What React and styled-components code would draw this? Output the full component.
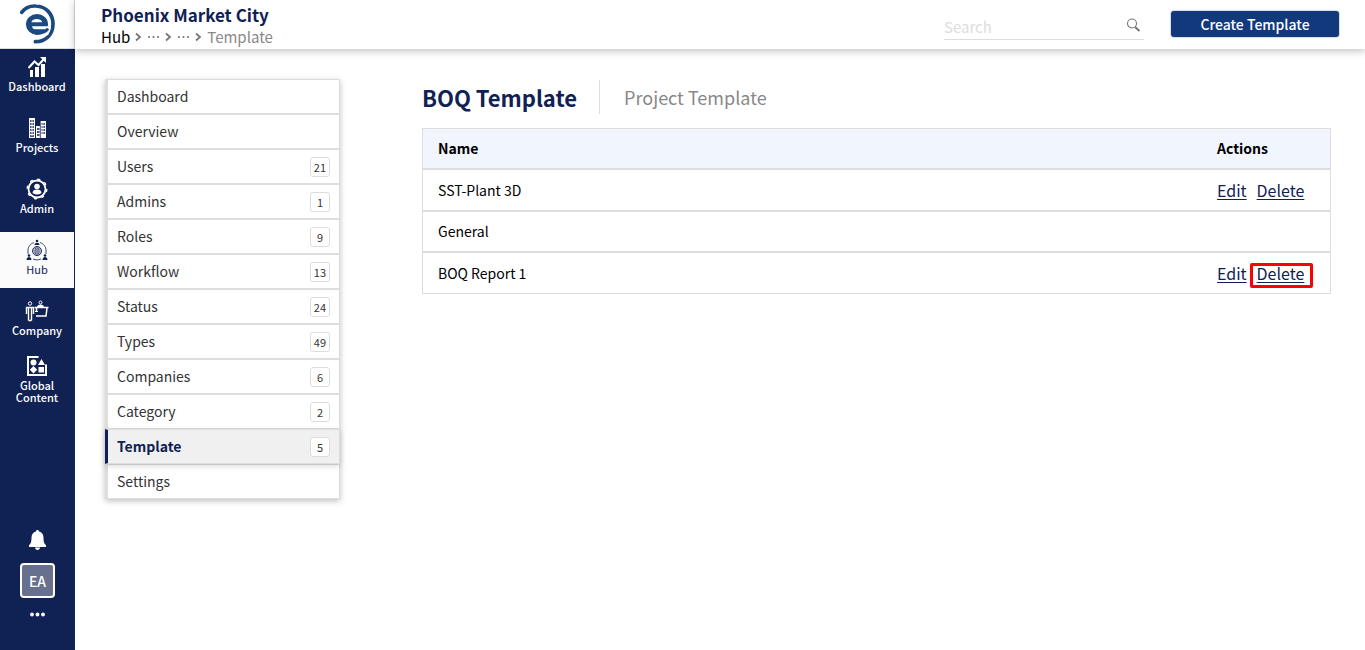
import React from "react";
import styled, { createGlobalStyle } from "styled-components";

const GlobalStyle = createGlobalStyle`
  * {
    box-sizing: border-box;
  }
  body {
    margin: 0;
    background-color: #fff;
    color: #000;
    font-family: "Noto Sans CJK SC", "Noto Sans", sans-serif;
    font-size: 14px;
    line-height: 20px;
  }
  button,
  input {
    font-family: inherit;
  }
`;

const Page = styled.div`
  display: flex;
  min-height: 100vh;
`;

const Sidebar = styled.aside`
  width: 75px;
  flex-shrink: 0;
  display: flex;
  flex-direction: column;
  background-color: #102154;
`;

const LogoLink = styled.a`
  height: 49px;
  display: flex;
  align-items: center;
  justify-content: center;
  background-color: #fff;
  border-right: 1px solid #ddd;
  border-bottom: 1px solid #ddd;
  padding-bottom: 1px;
`;

const SideNav = styled.nav`
  display: flex;
  flex-direction: column;
  gap: 5px;
`;

const SideLink = styled.a`
  min-height: 56px;
  margin-right: 1px;
  display: flex;
  flex-direction: column;
  align-items: center;
  justify-content: center;
  gap: 2px;
  padding-bottom: 6px;
  color: ${(props) => (props.$active ? "#102154" : "#fff")};
  background-color: ${(props) => (props.$active ? "#fbfbfb" : "transparent")};
  font-size: 11px;
  font-weight: ${(props) => (props.$active ? 400 : 500)};
  line-height: 12px;
  text-align: center;
  text-decoration: none;
`;

const SideFooter = styled.div`
  margin-top: auto;
  padding-bottom: 32px;
  display: flex;
  flex-direction: column;
  align-items: center;
  gap: 13px;
`;

const IconButton = styled.button`
  display: flex;
  padding: 0;
  border: 0;
  background: none;
  color: #fff;
  cursor: pointer;
`;

const Avatar = styled.button`
  width: 35px;
  height: 35px;
  padding: 0;
  border: 2px solid #fff;
  border-radius: 4px;
  background-color: #67708c;
  color: #fff;
  font-size: 14px;
  font-weight: 500;
  line-height: 20px;
  cursor: pointer;
`;

const Body = styled.div`
  flex: 1;
  min-width: 0;
`;

const Header = styled.header`
  height: 49px;
  display: flex;
  align-items: center;
  justify-content: space-between;
  padding: 0 26px;
  background-color: #fff;
  box-shadow: 0 2px 8px rgba(0, 0, 0, 0.25);
`;

const Heading = styled.div`
  padding-top: 2px;
`;

const ProjectName = styled.h1`
  margin: 0;
  color: #102154;
  font-size: 17px;
  font-weight: 700;
  line-height: 22px;
`;

const Crumbs = styled.nav`
  display: flex;
  align-items: center;
  gap: 5px;
  color: #888;
  font-size: 15px;
  line-height: 22px;
  a {
    color: #000;
    text-decoration: none;
  }
`;

const Dots = styled.svg`
  width: 13px;
  height: 4px;
  fill: #777;
`;

const HeaderTools = styled.div`
  display: flex;
  align-items: center;
  gap: 27px;
  padding-bottom: 2px;
`;

const SearchBox = styled.label`
  width: 200px;
  height: 28px;
  display: flex;
  align-items: center;
  margin-top: 4px;
  padding-right: 3px;
  border-bottom: 1px solid #ddd;
`;

const SearchInput = styled.input`
  flex: 1;
  min-width: 0;
  padding: 3px 0 0;
  border: 0;
  outline: 0;
  font-size: 15px;
  line-height: 20px;
  &::placeholder {
    color: #ddd;
  }
`;

const CreateButton = styled.button`
  width: 168px;
  height: 26px;
  padding: 0;
  border: 0;
  border-radius: 3px;
  box-shadow: 0 0 1px 1px #d5dae3;
  background-color: #11397c;
  color: #fff;
  font-size: 14px;
  font-weight: 500;
  line-height: 20px;
  cursor: pointer;
`;

const Content = styled.div`
  display: flex;
  align-items: flex-start;
  gap: 82px;
  padding: 30px 34px 30px 30px;
`;

const Menu = styled.nav`
  width: 235px;
  flex-shrink: 0;
  box-shadow: 0 2px 6px rgba(0, 0, 0, 0.25);
`;

const MenuLink = styled.a`
  height: 35px;
  display: flex;
  align-items: center;
  justify-content: space-between;
  padding: 0 9px 1px;
  border: 1px solid #ddd;
  border-left: 3px solid ${(props) => (props.$active ? "#102154" : "#ddd")};
  background-color: ${(props) => (props.$active ? "#f0f0f0" : "#fff")};
  box-shadow: ${(props) =>
    props.$active ? "0 2px 6px rgba(0, 0, 0, 0.15)" : "none"};
  position: ${(props) => (props.$active ? "relative" : "static")};
  color: ${(props) => (props.$active ? "#102154" : "#333")};
  font-size: 14px;
  font-weight: ${(props) => (props.$active ? 700 : 400)};
  line-height: 20px;
  text-decoration: none;
`;

const Count = styled.span`
  min-width: 20px;
  height: 20px;
  margin-top: 1px;
  padding: 0 3px;
  border: 1px solid #ddd;
  border-radius: 3px;
  background-color: #fff;
  color: #333;
  font-size: 11px;
  font-weight: 400;
  line-height: 18px;
  text-align: center;
`;

const Main = styled.main`
  flex: 1;
  min-width: 0;
`;

const Tabs = styled.div`
  display: flex;
  align-items: center;
  margin: 1px 0 14px;
`;

const Tab = styled.button`
  height: 34px;
  padding: ${(props) => (props.$active ? "0 22px 0 0" : "0 24px")};
  border: 0;
  border-right: ${(props) => (props.$active ? "1px solid #ddd" : "0")};
  background: none;
  color: ${(props) => (props.$active ? "#102154" : "#888")};
  font-size: ${(props) => (props.$active ? "22px" : "18px")};
  font-weight: ${(props) => (props.$active ? 700 : 400)};
  line-height: 32px;
  cursor: pointer;
`;

const Table = styled.table`
  width: 100%;
  border-collapse: separate;
  border-spacing: 0;
  border: 1px solid #ddd;
  border-width: 0 1px;
  th,
  td {
    padding: 9px 15px 10px;
    border: 1px solid #ddd;
    border-width: 1px 0;
    text-align: left;
    line-height: 20px;
  }
  th {
    background-color: #f1f6fe;
    font-weight: 700;
  }
  th:last-child,
  td:last-child {
    width: 128px;
    white-space: nowrap;
  }
`;

const Actions = styled.div`
  display: flex;
  gap: 10px;
  padding-top: 1px;
  font-size: 16px;
  line-height: 20px;
`;

const ActionLink = styled.a`
  position: relative;
  color: #102154;
  text-decoration: underline;
  text-decoration-thickness: 1px;
  text-underline-offset: 2px;
`;

const Highlight = styled.span`
  position: absolute;
  inset: 0 -9px -5px -7px;
  border: 3px solid #f00;
  border-radius: 2px;
  pointer-events: none;
`;

const LogoIcon = () => (
  <svg width="35" height="40" viewBox="0 0 105 120" fill="none" stroke="#1a4a80">
    <path d="M5 25C16 10 31 5 48 6C78 7 99 30 99 60C99 91 78 113 46 113" strokeWidth="11" strokeLinecap="round" />
    <ellipse cx="51" cy="61" rx="33" ry="31" fill="#1a4a80" stroke="none" />
    <path d="M34 55C38 42 62 42 67 55z" fill="#fff" stroke="none" />
    <path d="M36 67H92V76H46C40 76 37 72 36 67z" fill="#fff" stroke="none" />
    <path d="M78 76H92L84 94H60z" fill="#fff" stroke="none" />
    <path d="M46 87C62 89 76 85 84 74" strokeWidth="9" />
  </svg>
);

const ChartIcon = () => (
  <svg width="19" height="22" viewBox="0 0 19 22" fill="#fff">
    <path d="M2 14h3v7H2zM7 11h4v10H7zM13 8h4v13h-4z" />
    <path d="M0.500 12l6-6.500 4 3.500 5-5.500" fill="none" stroke="#fff" strokeWidth="2" />
    <path d="M12 1h6v6z" />
  </svg>
);

const BuildingsIcon = () => (
  <svg width="19" height="22" viewBox="0 0 19 22">
    <path d="M1 1h6v20H1zM8 9h4v12H8zM12 4h6v17h-6z" fill="#fff" />
    <path d="M2 4h4M2 7h4M2 10h4M2 13h4M2 16h4M2 19h4M9 12h2.500M9 15h2.500M9 18h2.500M13.500 7h3.500M13.500 10h3.500M13.500 13h3.500M13.500 16h3.500" stroke="#102154" strokeWidth="1.300" />
    <path d="M4 2v17M15 5v14" stroke="#fff" strokeWidth="0.800" />
    <path d="M12.300 4v17" stroke="#102154" strokeWidth="0.800" />
  </svg>
);

const AdminIcon = () => (
  <svg width="22" height="22" viewBox="0 0 22 22" fill="none" stroke="#fff">
    <circle cx="11" cy="11" r="8.500" strokeWidth="1.800" />
    <circle cx="11" cy="11" r="9.800" strokeWidth="1.400" strokeDasharray="3 4.700" />
    <circle cx="11" cy="8.500" r="2.800" fill="#fff" stroke="none" />
    <path d="M6.500 15c0-2.500 2-3.500 4.500-3.500s4.500 1 4.500 3.500c-3 2-6 2-9 0z" fill="#fff" stroke="none" />
  </svg>
);

const HubIcon = () => (
  <svg width="22" height="22" viewBox="0 0 22 22" fill="none" stroke="#102154">
    <circle cx="11" cy="12" r="4.500" strokeWidth="0.900" />
    <ellipse cx="11" cy="12" rx="2" ry="4.500" strokeWidth="0.600" />
    <path d="M6.500 12h9M11 7.500v9M7 10h8M7 14h8" strokeWidth="0.600" />
    <path d="M8 3.500C4 5 2 8 2 11v4M14 3.500c4 1.500 6 4.500 6 7.500v4M7 20c3 1.200 5 1.200 8 0" strokeWidth="0.800" />
    <g fill="#102154" stroke="none">
      <circle cx="11" cy="2" r="1.300" />
      <path d="M8.500 6c0-3 5-3 5 0z" />
      <circle cx="3" cy="16.500" r="1.300" />
      <path d="M0.500 21c0-4 5-4 5 0z" />
      <circle cx="19" cy="16.500" r="1.300" />
      <path d="M16.500 21c0-4 5-4 5 0z" />
    </g>
  </svg>
);

const CompanyIcon = () => (
  <svg width="24" height="22" viewBox="0 0 24 22" fill="none" stroke="#fff">
    <circle cx="5" cy="3.500" r="1.700" />
    <path d="M1.500 14V7.500h7V14M3.500 8v12.500M6.500 8v12.500M3.500 20.500H6.500" strokeWidth="1.400" />
    <circle cx="15.500" cy="2.500" r="1.500" />
    <path d="M12 7c0-3.500 7-3.500 7 0z" fill="#fff" stroke="none" />
    <path d="M9.500 7.500h14M11.500 8v3.500M22 8l-1 8H11" strokeWidth="1.500" />
    <path d="M10 11.500h3" />
  </svg>
);

const GlobalIcon = () => (
  <svg width="22" height="22" viewBox="0 0 22 22" fill="#fff">
    <path d="M12.500 2H2v18h18V9.500" fill="none" stroke="#fff" strokeWidth="2" />
    <circle cx="7.500" cy="7.500" r="3" />
    <path d="M15.500 4l3.500 6h-7zM7.500 11l3.700 3.700-3.700 3.700-3.700-3.700zM12.500 12h5.500v5.500h-5.500z" />
  </svg>
);

const BellIcon = () => (
  <svg width="17" height="20" viewBox="0 0 17 20" fill="#fff">
    <path d="M8.500 0c1 0 1.500.6 1.500 1.500 3 .7 4.500 3 4.500 6 0 4.500.7 6 2.500 7.700V17H0v-1.800C1.800 13.500 2.500 12 2.500 7.500c0-3 1.500-5.300 4.500-6C7 .6 7.500 0 8.500 0zM6 17.500h5c0 3.300-5 3.300-5 0z" />
  </svg>
);

const MoreIcon = () => (
  <svg width="15" height="7" viewBox="0 0 15 7" fill="#fff">
    <circle cx="2" cy="3.500" r="1.900" />
    <circle cx="7.500" cy="3.500" r="1.900" />
    <circle cx="13" cy="3.500" r="1.900" />
  </svg>
);

const SearchIcon = () => (
  <svg width="15" height="15" viewBox="0 0 15 15" fill="none" stroke="#777">
    <circle cx="6" cy="5.500" r="4.500" strokeWidth="1.100" />
    <path d="M9 9l4.500 4" strokeWidth="2" />
  </svg>
);

const Chevron = () => (
  <svg width="7" height="10" viewBox="0 0 7 10" fill="none" stroke="#777" strokeWidth="1.800">
    <path d="M1 1.500l4 3.500-4 3.500" />
  </svg>
);

const CrumbDots = () => (
  <Dots viewBox="0 0 13 4">
    <circle cx="2" cy="2" r="1.100" />
    <circle cx="6.500" cy="2" r="1.100" />
    <circle cx="11" cy="2" r="1.100" />
  </Dots>
);

const sideItems = [
  { label: "Dashboard", icon: ChartIcon },
  { label: "Projects", icon: BuildingsIcon },
  { label: "Admin", icon: AdminIcon },
  { label: "Hub", icon: HubIcon, active: true },
  { label: "Company", icon: CompanyIcon },
  { label: "Global Content", icon: GlobalIcon },
];

const menuItems = [
  { label: "Dashboard" },
  { label: "Overview" },
  { label: "Users", count: 21 },
  { label: "Admins", count: 1 },
  { label: "Roles", count: 9 },
  { label: "Workflow", count: 13 },
  { label: "Status", count: 24 },
  { label: "Types", count: 49 },
  { label: "Companies", count: 6 },
  { label: "Category", count: 2 },
  { label: "Template", count: 5, active: true },
  { label: "Settings" },
];

const templates = [
  { name: "SST-Plant 3D", editable: true },
  { name: "General" },
  { name: "BOQ Report 1", editable: true, marked: true },
];

const App = () => {
  return (
    <Page>
      <GlobalStyle />
      <Sidebar>
        <LogoLink href="#home" aria-label="Home">
          <LogoIcon />
        </LogoLink>
        <SideNav>
          {sideItems.map((item) => (
            <SideLink key={item.label} href="#" $active={item.active}>
              <item.icon />
              {item.label}
            </SideLink>
          ))}
        </SideNav>
        <SideFooter>
          <IconButton aria-label="Notifications">
            <BellIcon />
          </IconButton>
          <Avatar>EA</Avatar>
          <IconButton aria-label="More">
            <MoreIcon />
          </IconButton>
        </SideFooter>
      </Sidebar>
      <Body>
        <Header>
          <Heading>
            <ProjectName>Phoenix Market City</ProjectName>
            <Crumbs aria-label="Breadcrumb">
              <a href="#hub">Hub</a>
              <Chevron />
              <CrumbDots />
              <Chevron />
              <CrumbDots />
              <Chevron />
              <span>Template</span>
            </Crumbs>
          </Heading>
          <HeaderTools>
            <SearchBox>
              <SearchInput type="text" placeholder="Search" aria-label="Search" />
              <SearchIcon />
            </SearchBox>
            <CreateButton>Create Template</CreateButton>
          </HeaderTools>
        </Header>
        <Content>
          <Menu>
            {menuItems.map((item) => (
              <MenuLink key={item.label} href="#" $active={item.active}>
                {item.label}
                {item.count && <Count>{item.count}</Count>}
              </MenuLink>
            ))}
          </Menu>
          <Main>
            <Tabs>
              <Tab $active>BOQ Template</Tab>
              <Tab>Project Template</Tab>
            </Tabs>
            <Table>
              <thead>
                <tr>
                  <th>Name</th>
                  <th>Actions</th>
                </tr>
              </thead>
              <tbody>
                {templates.map((row) => (
                  <tr key={row.name}>
                    <td>{row.name}</td>
                    <td>
                      {row.editable && (
                        <Actions>
                          <ActionLink href="#edit">Edit</ActionLink>
                          <ActionLink href="#delete">
                            Delete
                            {row.marked && <Highlight />}
                          </ActionLink>
                        </Actions>
                      )}
                    </td>
                  </tr>
                ))}
              </tbody>
            </Table>
          </Main>
        </Content>
      </Body>
    </Page>
  );
};

export default App;
